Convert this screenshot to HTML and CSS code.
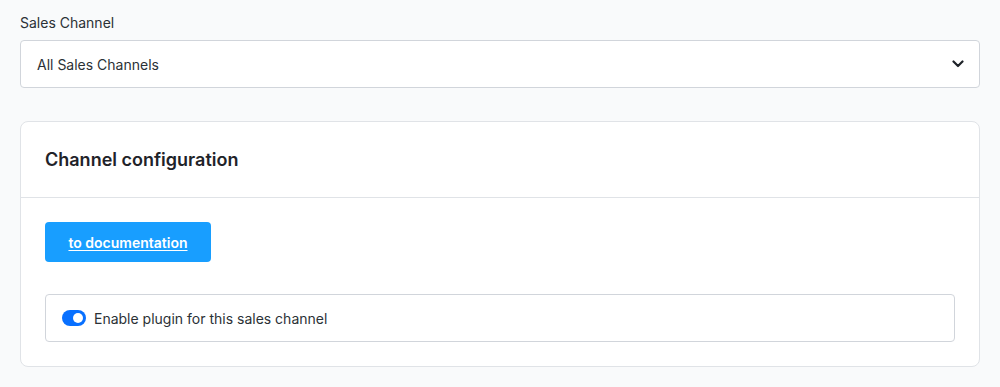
FILE: index.html
```html
<!DOCTYPE html>
<html>
<head>
<meta charset="utf-8">
<title>Channel configuration</title>
<link rel="stylesheet" href="styles.css">
</head>
<body>

<div class="field">
	<label class="field_label">Sales Channel</label>
	<div class="select">
		<span>All Sales Channels</span>
		<svg class="chevron" width="12" height="8" viewBox="0 0 12 8">
			<path d="M1.5 1.5 L6 6 L10.5 1.5" fill="none" stroke="#1f2329" stroke-width="2.2" stroke-linecap="round" stroke-linejoin="round"/>
		</svg>
	</div>
</div>

<div class="card">
	<div class="card_header">Channel configuration</div>
	<div class="card_body">
		<a class="button" href="#">to documentation</a>
		<div class="switch_field">
			<span class="toggle"><span class="knob"></span></span>
			<span>Enable plugin for this sales channel</span>
		</div>
	</div>
</div>

</body>
</html>
```

FILE: styles.css
```css
body {
	margin: 0;
	padding: 14px 20px 20px 20px;
	background: #f9fafb;
	font-family: Inter, "Noto Sans", sans-serif;
	color: #2b3136;
	font-size: 14px;
}

.field_label {
	display: block;
	font-size: 14px;
	line-height: 18px;
	margin-bottom: 8px;
	color: #2b3136;
}

.select {
	height: 46px;
	background: white;
	border: 1px solid #d1d5db;
	border-radius: 4px;
	display: flex;
	align-items: center;
	justify-content: space-between;
	padding: 0 15px 0 16px;
}

.card {
	margin-top: 33px;
	background: white;
	border: 1px solid #e0e3e7;
	border-radius: 8px;
}

.card_header {
	height: 75px;
	display: flex;
	align-items: center;
	padding: 0 24px;
	font-size: 18px;
	font-weight: 600;
	color: #1f2329;
	border-bottom: 1px solid #e0e3e7;
}

.card_body {
	padding: 24px 24px 24px 24px;
}

.button {
	display: inline-flex;
	align-items: center;
	justify-content: center;
	width: 166px;
	height: 40px;
	background: #189eff;
	color: white;
	font-size: 14px;
	font-weight: 600;
	border-radius: 4px;
	text-decoration: underline;
	text-decoration-thickness: 1px;
	text-underline-offset: 2px;
}

.switch_field {
	margin-top: 32px;
	height: 46px;
	border: 1px solid #d1d5db;
	border-radius: 4px;
	display: flex;
	align-items: center;
	padding: 0 16px;
	gap: 8px;
	font-size: 14px;
}

.toggle {
	width: 18px;
	height: 16px;
	border-radius: 8px;
	background: #0870ff;
	display: flex;
	align-items: center;
	justify-content: flex-end;
	padding: 0 3px;
}

.knob {
	width: 10px;
	height: 10px;
	border-radius: 50%;
	background: white;
}
```
